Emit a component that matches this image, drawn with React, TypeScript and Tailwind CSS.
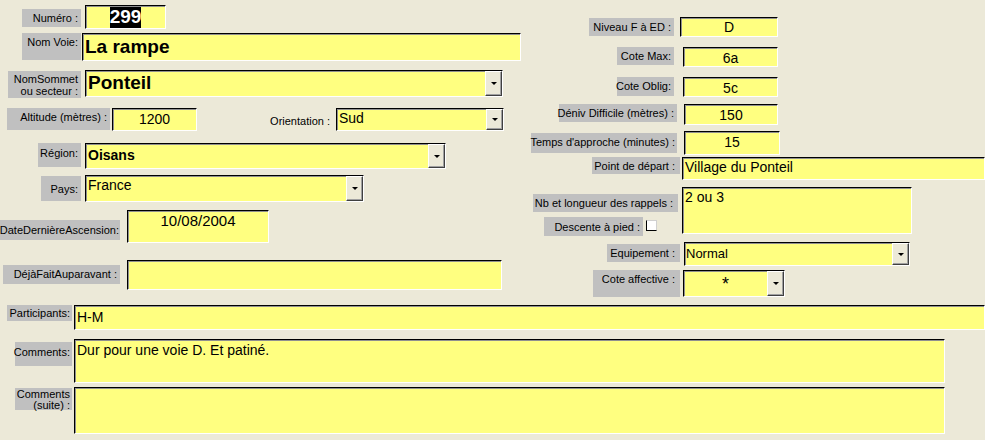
import type { ReactNode } from "react"

const font = { fontFamily: '"Liberation Sans", Arial, sans-serif' }

function Label({ className = "", children }: { className?: string; children: ReactNode }) {
  return (
    <div
      className={`flex shrink-0 items-start justify-end bg-[#c0c0c0] pr-[3px] pt-[3px] text-[11px] leading-[12px] text-black ${className}`}
    >
      <span className="whitespace-nowrap text-right">{children}</span>
    </div>
  )
}

function DropButton() {
  return (
    <div className="flex w-[17px] shrink-0 items-center justify-center border-t border-l border-r border-b border-t-white border-l-white border-r-[#404040] border-b-[#404040] bg-[#ece9d8] shadow-[inset_-1px_-1px_0_#a0a0a0]">
      <div className="h-0 w-0 border-l-[3px] border-r-[3px] border-t-[3px] border-l-transparent border-r-transparent border-t-black" />
    </div>
  )
}

function Field({
  className = "",
  inner = "",
  combo = false,
  children,
}: {
  className?: string
  inner?: string
  combo?: boolean
  children?: ReactNode
}) {
  return (
    <div
      className={`flex shrink-0 border-t border-l border-r border-b border-t-black border-l-black border-r-white border-b-white bg-[#ffff80] shadow-[inset_1px_1px_0_#909090] ${className}`}
    >
      <div className={`min-w-0 flex-1 overflow-hidden whitespace-nowrap text-black ${inner}`}>{children}</div>
      {combo && <DropButton />}
    </div>
  )
}

export default function App() {
  return (
    <div className="h-[440px] w-[985px] overflow-hidden bg-[#ece9d8]" style={font}>
      {/* top section: two columns */}
      <div className="flex h-[305px]">
        {/* left column */}
        <div className="w-[526px] shrink-0 pt-[5px]">
          <div className="flex h-[28px] items-start">
            <Label className="ml-[22px] mt-[4px] h-[18px] w-[59px]">Numéro :</Label>
            <Field className="ml-[4px] h-[24px] w-[81px]" inner="flex justify-center pt-[1px]">
              <span className="bg-black text-[19px] font-bold leading-[20px] text-white">299</span>
            </Field>
          </div>
          <div className="flex h-[37px] items-start">
            <Label className="ml-[22px] h-[27px] w-[59px]">Nom Voie:</Label>
            <Field className="ml-[1px] h-[28px] w-[439px]" inner="pl-[2px] pt-[2px] text-[19px] font-bold leading-[22px]">
              La rampe
            </Field>
          </div>
          <div className="flex h-[38px] items-start">
            <Label className="ml-[8px] mt-[1px] h-[27px] w-[73px] !pt-[2px] !leading-[12px]">
              NomSommet
              <br />
              ou secteur :
            </Label>
            <Field className="ml-[4px] h-[27px] w-[418px]" combo inner="pl-[2px] pt-[1px] text-[19px] font-bold leading-[22px]">
              Ponteil
            </Field>
          </div>
          <div className="flex h-[35px] items-start">
            <Label className="ml-[7px] h-[22px] w-[103px]">Altitude (mètres) :</Label>
            <Field className="ml-[2px] h-[23px] w-[85px]" inner="pt-[2px] text-center text-[14px] leading-[17px]">
              1200
            </Field>
            <div className="mt-[7px] w-[139px] shrink-0 pr-[6px] text-right text-[11px] leading-[12px]">Orientation :</div>
            <Field className="h-[23px] w-[168px]" combo inner="pl-[2px] pt-[1px] text-[14px] leading-[17px]">
              Sud
            </Field>
          </div>
          <div className="flex h-[32px] items-start">
            <Label className="ml-[38px] h-[24px] w-[43px] !pt-[4px]">Région:</Label>
            <Field className="ml-[4px] h-[26px] w-[361px]" combo inner="pl-[2px] pt-[3px] text-[14px] font-bold leading-[17px]">
              Oisans
            </Field>
          </div>
          <div className="flex h-[35px] items-start">
            <Label className="ml-[41px] mt-[1px] h-[25px] w-[40px] !pt-[7px]">Pays:</Label>
            <Field className="ml-[4px] h-[27px] w-[279px]" combo inner="pl-[2px] pt-[1px] text-[14px] leading-[17px]">
              France
            </Field>
          </div>
          <div className="flex h-[50px] items-start">
            <Label className="mt-[10px] h-[20px] w-[120px] !pr-[1px] !pt-[4px]">DateDernièreAscension:</Label>
            <Field className="ml-[7px] h-[33px] w-[142px]" inner="pt-[1px] text-center text-[15px] leading-[18px]">
              10/08/2004
            </Field>
          </div>
          <div className="flex h-[45px] items-start">
            <Label className="ml-[3px] mt-[5px] h-[19px] w-[117px]">DéjàFaitAuparavant :</Label>
            <Field className="ml-[7px] h-[30px] w-[375px]" />
          </div>
        </div>

        {/* right column */}
        <div className="flex-1 pt-[17px]">
          <div className="flex h-[30px] items-start">
            <Label className="ml-[63px] mt-[1px] h-[18px] w-[85px]">Niveau F à ED :</Label>
            <Field className="ml-[6px] h-[20px] w-[98px]" inner="text-center text-[14px] leading-[18px]">
              D
            </Field>
          </div>
          <div className="flex h-[30px] items-start">
            <Label className="ml-[91px] h-[18px] w-[57px]">Cote Max:</Label>
            <Field className="ml-[9px] h-[20px] w-[95px]" inner="pt-[1px] text-center text-[14px] leading-[18px]">
              6a
            </Field>
          </div>
          <div className="flex h-[27px] items-start">
            <Label className="ml-[91px] h-[19px] w-[57px]">Cote Oblig:</Label>
            <Field className="ml-[9px] h-[20px] w-[95px]" inner="pt-[1px] text-center text-[14px] leading-[18px]">
              5c
            </Field>
          </div>
          <div className="flex h-[27px] items-start">
            <Label className="ml-[33px] h-[18px] w-[118px]">Déniv Difficile (mètres) :</Label>
            <Field className="ml-[7px] h-[21px] w-[94px]" inner="pt-[1px] text-center text-[14px] leading-[18px]">
              150
            </Field>
          </div>
          <div className="flex h-[26px] items-start">
            <Label className="ml-[5px] mt-[2px] h-[20px] w-[146px] !pr-[2px]">Temps d'approche (minutes) :</Label>
            <Field className="ml-[7px] h-[24px] w-[96px]" inner="pt-[1px] text-center text-[14px] leading-[18px]">
              15
            </Field>
          </div>
          <div className="flex h-[30px] items-start">
            <Label className="ml-[66px] h-[17px] w-[88px] !pr-[5px]">Point de départ :</Label>
            <Field className="ml-[2px] h-[23px] w-[303px]" inner="pl-[2px] pt-[1px] text-[14px] leading-[17px]">
              Village du Ponteil
            </Field>
          </div>
          <div className="flex h-[55px] items-start">
            <div className="w-[156px] shrink-0">
              <Label className="ml-[7px] mt-[7px] h-[18px] w-[145px] !pr-[5px]">Nb et longueur des rappels :</Label>
              <div className="mt-[5px] flex items-start">
                <Label className="ml-[18px] h-[19px] w-[99px] !pt-[4px]">Descente à pied :</Label>
                <div className="ml-[3px] mt-[3px] h-[11px] w-[11px] border-l border-b border-t border-r border-l-black border-b-black border-t-[#d0d0d0] border-r-[#d0d0d0] bg-white" />
              </div>
            </div>
            <Field className="h-[47px] w-[230px]" inner="pl-[2px] pt-[1px] text-[14px] leading-[17px]">
              2 ou 3
            </Field>
          </div>
          <div className="flex h-[28px] items-start">
            <Label className="ml-[81px] mt-[2px] h-[18px] w-[73px] !pr-[5px]">Equipement :</Label>
            <Field className="ml-[4px] h-[24px] w-[226px]" combo inner="pl-[1px] pt-[2px] text-[13px] leading-[17px]">
              Normal
            </Field>
          </div>
          <div className="flex h-[35px] items-start">
            <Label className="ml-[67px] h-[27px] w-[87px] !pr-[5px]">Cote affective :</Label>
            <Field className="ml-[3px] h-[27px] w-[102px]" combo inner="pt-[3px] text-center text-[18px] leading-[20px]">
              *
            </Field>
          </div>
        </div>
      </div>

      {/* bottom rows */}
      <div className="flex h-[34px] items-start">
        <Label className="ml-[7px] h-[16px] w-[65px] !pr-[2px] !pt-[2px]">Participants:</Label>
        <Field className="ml-[2px] h-[25px] w-[911px]" inner="pl-[2px] pt-[3px] text-[14px] leading-[17px]">
          H-M
        </Field>
      </div>
      <div className="flex h-[48px] items-start">
        <Label className="ml-[15px] mt-[3px] h-[24px] w-[57px] !pr-[2px] !pt-[4px]">Comments:</Label>
        <Field className="ml-[2px] h-[44px] w-[871px]" inner="pl-[2px] pt-[2px] text-[14px] leading-[17px]">
          Dur pour une voie D. Et patiné.
        </Field>
      </div>
      <div className="flex h-[53px] items-start">
        <Label className="ml-[15px] mt-[1px] h-[22px] w-[57px] !pr-[2px] !pt-[1px] !leading-[11px]">
          Comments
          <br />
          (suite) :
        </Label>
        <Field className="ml-[2px] h-[47px] w-[871px]" />
      </div>
    </div>
  )
}
